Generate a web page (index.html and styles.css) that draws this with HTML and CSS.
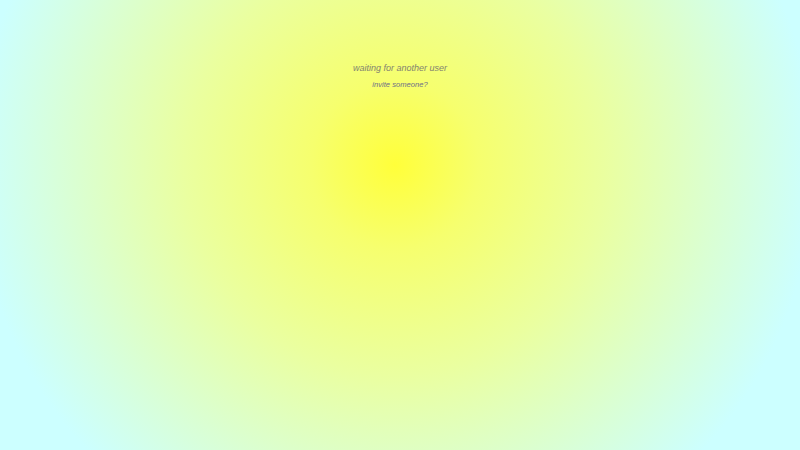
FILE: index.html
```html
<!DOCTYPE html>
<html>
<head>
<meta charset="utf-8">
<link rel="stylesheet" href="styles.css">
</head>
<body>
<main class="stage">
  <p class="status">waiting for another user</p>
  <a class="invite" href="#">invite someone?</a>
</main>
</body>
</html>
```
FILE: styles.css
```css
html, body {
  margin: 0;
  padding: 0;
  width: 100%;
  height: 100%;
}
body {
  background: radial-gradient(circle 420px at 395px 165px, #ffff3a 0%, #f6ff6e 20%, #eaffa0 50%, #ccffff 100%);
  background-color: #ccffff;
  font-family: "Liberation Sans", Arial, sans-serif;
}
.stage {
  display: flex;
  flex-direction: column;
  align-items: center;
  padding-top: 62px;
}
.status {
  margin: 0;
  font-style: italic;
  font-size: 9px;
  color: #838370;
  line-height: 12px;
}
.invite {
  margin-top: 6px;
  font-style: italic;
  font-size: 7.6px;
  line-height: 10px;
  color: #6f6f88;
  text-decoration: none;
}
```
